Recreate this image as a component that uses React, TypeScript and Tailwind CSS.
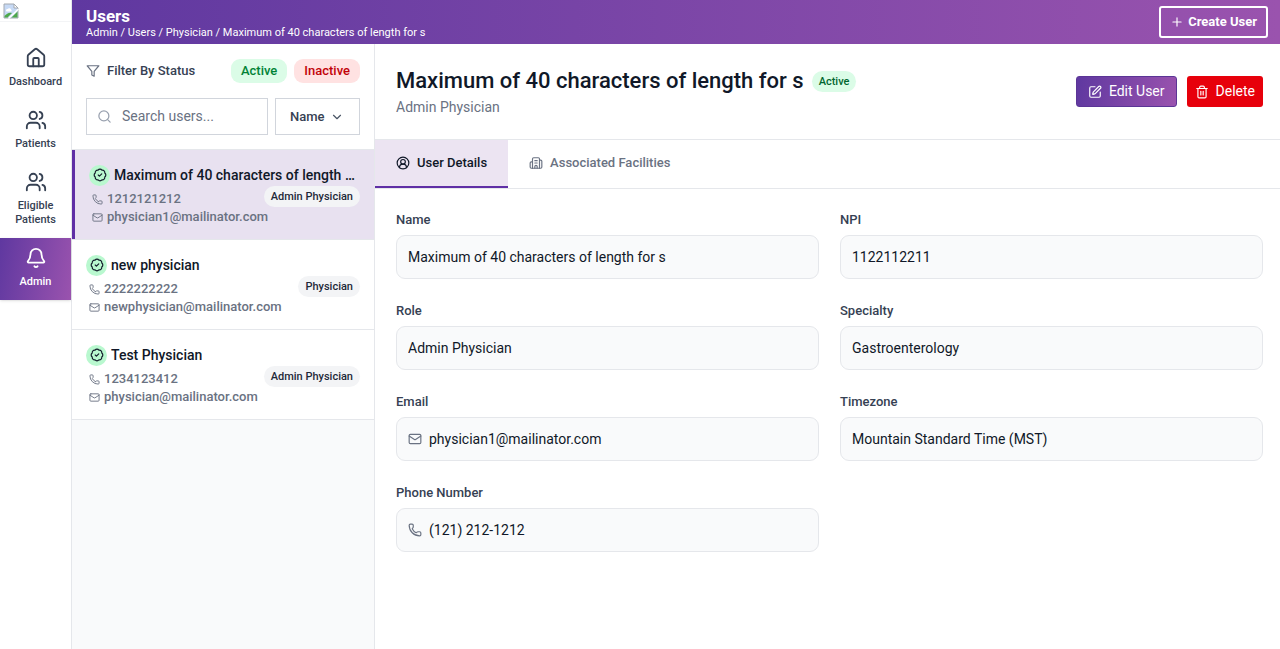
import { useState, type ReactNode } from "react";
import {
  BadgeCheck,
  Bell,
  Building2,
  ChevronDown,
  CircleUserRound,
  House,
  Mail,
  Phone,
  Plus,
  Search,
  SquarePen,
  Trash2,
  Users,
} from "lucide-react";

const NAV = [
  { label: "Dashboard", icon: House },
  { label: "Patients", icon: Users },
  { label: "Eligible Patients", icon: Users },
  { label: "Admin", icon: Bell, active: true },
];

const USERS = [
  {
    name: "Maximum of 40 characters of length for s",
    phone: "1212121212",
    email: "physician1@mailinator.com",
    role: "Admin Physician",
  },
  {
    name: "new physician",
    phone: "2222222222",
    email: "newphysician@mailinator.com",
    role: "Physician",
  },
  {
    name: "Test Physician",
    phone: "1234123412",
    email: "physician@mailinator.com",
    role: "Admin Physician",
  },
];

function BrokenImage() {
  return (
    <svg width="16" height="16" viewBox="0 0 16 16" role="img" aria-label="Logo">
      <path d="M1 1h10l4 4v10H1z" fill="#c6d9f5" stroke="#a3a9b0" />
      <path d="M11 1v4h4z" fill="#fff" stroke="#a3a9b0" />
      <path d="M3 7.5a1.5 1.5 0 0 1 1.6-1.4 2 2 0 0 1 3.6.6A1.1 1.1 0 0 1 8 8.6H3.8A1 1 0 0 1 3 7.5z" fill="#fff" />
      <path d="M1.5 14.5V13c2-2.6 5-4 7.5-3L4.5 14.5z" fill="#4ea84a" />
      <path d="M8.5 14.5l6-6v6z" fill="#4ea84a" />
      <path d="M5.5 15.5L15.5 6" stroke="#fff" strokeWidth="1.5" />
    </svg>
  );
}

function FunnelIcon() {
  return (
    <svg
      width="14"
      height="14"
      viewBox="0 0 24 24"
      fill="none"
      stroke="currentColor"
      strokeWidth="2"
      strokeLinecap="round"
      strokeLinejoin="round"
      className="shrink-0 text-gray-500"
      aria-hidden="true"
    >
      <polygon points="22 3 2 3 10 12.46 10 19 14 21 14 12.46 22 3" />
    </svg>
  );
}

function Sidebar() {
  return (
    <aside className="flex w-18 shrink-0 flex-col border-r border-gray-200 bg-white">
      <div className="h-[22px] border-b border-gray-100 pt-[3px] pl-[3px]">
        <BrokenImage />
      </div>
      <nav className="flex flex-col pt-4">
        {NAV.map(({ label, icon: Icon, active }) => (
          <a
            key={label}
            href="#"
            className={
              active
                ? "flex flex-col items-center gap-[6px] bg-linear-[100deg] from-[#5f38a0] to-[#9a53ae] px-2 pt-[9px] pb-[11px] text-center text-[11px] leading-[14px] font-medium text-white shadow-sm"
                : "flex flex-col items-center gap-[6px] px-2 pt-[9px] pb-[11px] text-center text-[11px] leading-[14px] font-medium text-gray-700"
            }
          >
            <Icon size={22} strokeWidth={2} />
            {label}
          </a>
        ))}
      </nav>
    </aside>
  );
}

function UserList() {
  const [selected, setSelected] = useState(0);
  return (
    <section className="flex w-[303px] shrink-0 flex-col border-r border-gray-200 bg-gray-50">
      <div className="flex flex-col gap-[15px] border-b border-gray-200 bg-white px-[14px] pt-[15px] pb-[14px]">
        <div className="flex items-center gap-[7px]">
          <FunnelIcon />
          <span className="flex-1 text-[13px] font-medium text-gray-700">Filter By Status</span>
          <button className="h-6 rounded-[9px] bg-green-100 px-[10px] text-[13px] font-medium text-green-700">
            Active
          </button>
          <button className="h-6 rounded-[9px] bg-red-100 px-[10px] text-[13px] font-medium text-red-700">
            Inactive
          </button>
        </div>
        <div className="flex gap-[7px]">
          <label className="flex h-[37px] min-w-0 flex-1 items-center gap-[10px] border border-gray-300 bg-white px-[10px]">
            <Search size={15} className="shrink-0 text-gray-400" />
            <input
              type="text"
              aria-label="Search users"
              placeholder="Search users..."
              className="w-full min-w-0 bg-transparent text-[14px] text-gray-900 outline-none placeholder:text-gray-500"
            />
          </label>
          <div className="relative">
            <select
              aria-label="Sort by"
              className="h-[37px] w-[85px] appearance-none border border-gray-300 bg-white pl-[14px] text-[13px] font-medium text-gray-700"
            >
              <option>Name</option>
            </select>
            <ChevronDown
              size={14}
              className="pointer-events-none absolute top-3 right-4 text-gray-600"
            />
          </div>
        </div>
      </div>
      <ul>
        {USERS.map((user, i) => (
          <li key={user.name} className="border-b border-gray-200">
            <button
              onClick={() => setSelected(i)}
              className={
                i === selected
                  ? "flex w-full flex-col border-l-3 border-[#5f2fa5] bg-[#e8e1f0] px-[14px] pt-[14px] pb-[13px] text-left"
                  : "flex w-full flex-col bg-white px-[14px] pt-[14px] pb-[13px] text-left"
              }
            >
              <span className="flex h-[22px] w-full items-center gap-1 pr-1">
                <span className="flex size-[21px] shrink-0 items-center justify-center rounded-full bg-green-200 text-gray-900">
                  <BadgeCheck size={14} />
                </span>
                <span className="truncate text-[14px] font-medium text-gray-900">{user.name}</span>
              </span>
              <span className="flex w-full items-start justify-between">
                <span className="flex flex-col pt-1 pl-[3px] text-[13px] leading-[18px] font-medium text-gray-500">
                  <span className="flex items-center gap-1">
                    <Phone size={11} />
                    {user.phone}
                  </span>
                  <span className="flex items-center gap-1">
                    <Mail size={11} />
                    {user.email}
                  </span>
                </span>
                <span className="-ml-8 rounded-full bg-gray-100 px-[7px] text-[11px] leading-[21px] font-medium text-gray-800">
                  {user.role}
                </span>
              </span>
            </button>
          </li>
        ))}
      </ul>
    </section>
  );
}

function Field({ id, label, value, icon }: { id: string; label: string; value: string; icon?: ReactNode }) {
  return (
    <div className="flex flex-col gap-[5px]">
      <label htmlFor={id} className="text-[13px] leading-5 font-medium text-gray-700">
        {label}
      </label>
      <div className="flex h-11 items-center gap-[7px] rounded-[9px] border border-gray-200 bg-gray-50 px-[11px] text-gray-500">
        {icon}
        <input
          id={id}
          readOnly
          value={value}
          className="w-full min-w-0 bg-transparent text-[14px] text-gray-900 outline-none"
        />
      </div>
    </div>
  );
}

function UserDetail() {
  return (
    <main className="min-w-0 flex-1 bg-white">
      <div className="flex items-center justify-between border-b border-gray-200 py-[21px] pr-[17px] pl-[21px]">
        <div>
          <div className="flex items-center gap-2">
            <h1 className="text-[22px] leading-8 font-medium text-gray-900">
              Maximum of 40 characters of length for s
            </h1>
            <span className="rounded-full bg-green-100 px-[7px] text-[11px] leading-[21px] font-medium text-green-800">
              Active
            </span>
          </div>
          <p className="text-[14px] leading-[21px] text-gray-500">Admin Physician</p>
        </div>
        <div className="flex gap-[10px]">
          <button className="flex h-[31px] items-center gap-[7px] rounded-[3px] border border-[#5b3596] bg-linear-[100deg] from-[#5f38a0] to-[#9a53ae] px-[11px] text-[14px] text-white">
            <SquarePen size={14} />
            Edit User
          </button>
          <button className="flex h-[31px] items-center gap-[7px] rounded-[3px] bg-[#e7000b] px-2 text-[14px] text-white">
            <Trash2 size={14} />
            Delete
          </button>
        </div>
      </div>
      <div role="tablist" className="flex border-b border-gray-200">
        <button
          role="tab"
          aria-selected="true"
          className="flex h-12 items-center gap-[7px] border-b-2 border-[#5f2fa5] bg-[#ece4f2] px-[21px] text-[13px] font-medium text-gray-900"
        >
          <CircleUserRound size={14} />
          User Details
        </button>
        <button
          role="tab"
          aria-selected="false"
          className="flex h-12 items-center gap-[7px] border-b-2 border-transparent px-[21px] text-[13px] font-medium text-gray-500"
        >
          <Building2 size={14} />
          Associated Facilities
        </button>
      </div>
      <div className="grid grid-cols-2 gap-x-[21px] gap-y-[22px] pt-[21px] pr-[17px] pl-[21px]">
        <Field id="name" label="Name" value="Maximum of 40 characters of length for s" />
        <Field id="npi" label="NPI" value="1122112211" />
        <Field id="role" label="Role" value="Admin Physician" />
        <Field id="specialty" label="Specialty" value="Gastroenterology" />
        <Field
          id="email"
          label="Email"
          value="physician1@mailinator.com"
          icon={<Mail size={14} className="shrink-0" />}
        />
        <Field id="timezone" label="Timezone" value="Mountain Standard Time (MST)" />
        <Field
          id="phone"
          label="Phone Number"
          value="(121) 212-1212"
          icon={<Phone size={14} className="shrink-0" />}
        />
      </div>
    </main>
  );
}

export default function App() {
  return (
    <div className="flex min-h-screen bg-white font-['Roboto',sans-serif]">
      <Sidebar />
      <div className="flex min-w-0 flex-1 flex-col">
        <header className="flex h-11 items-center justify-between bg-linear-to-r from-[#5f38a0] to-[#9a53ae] pr-3 pl-[14px] text-white">
          <div>
            <div className="text-[17px] leading-5 font-bold">Users</div>
            <div className="text-[11px] leading-[13px]">
              Admin / Users / Physician / Maximum of 40 characters of length for s
            </div>
          </div>
          <button className="flex h-8 items-center gap-1 rounded-[3px] border-2 border-white px-[9px] text-[13px] font-bold">
            <Plus size={14} />
            Create User
          </button>
        </header>
        <div className="flex min-w-0 flex-1">
          <UserList />
          <UserDetail />
        </div>
      </div>
    </div>
  );
}
